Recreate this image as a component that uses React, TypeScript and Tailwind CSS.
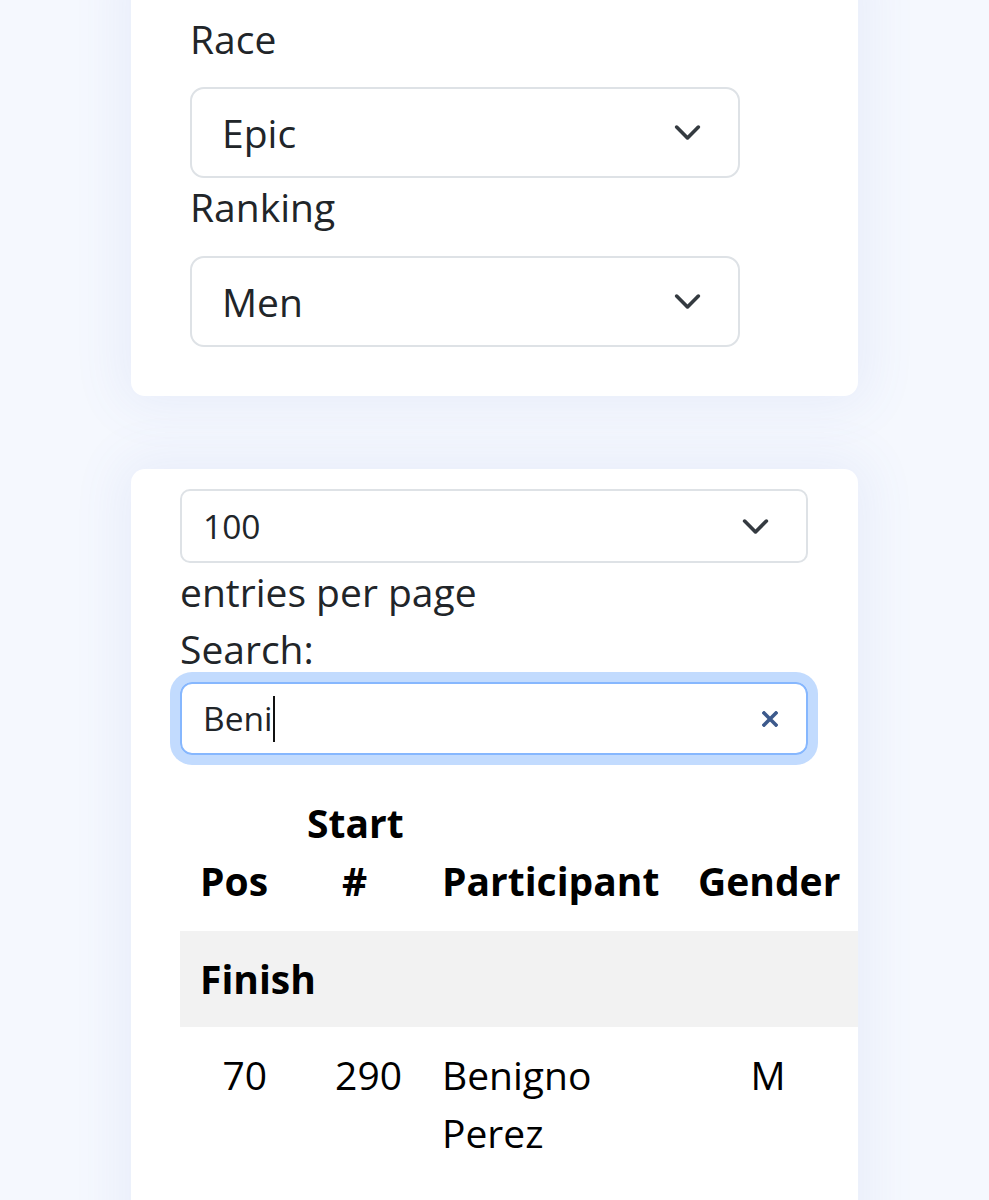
import React from "react";

const font = { fontFamily: '"Open Sans", "Noto Sans", sans-serif' };

function Chevron() {
  return (
    <svg viewBox="0 0 16 16" className="w-[29px] h-[29px] shrink-0" fill="none" stroke="#343a40" strokeWidth="2" strokeLinecap="round" strokeLinejoin="round">
      <path d="m2 5 6 6 6-6" />
    </svg>
  );
}

function Select({ value }: { value: string }) {
  return (
    <div className="flex items-center justify-between w-[550px] h-[91px] border-2 border-[#dee2e6] rounded-[14px] pl-[30px] pr-[36px] text-[39px] leading-[57px] text-[#212529] bg-white">
      <span>{value}</span>
      <Chevron />
    </div>
  );
}

export default function App() {
  return (
    <div className="h-[1200px] overflow-hidden bg-[#f5f8fe]" style={font}>
      {/* Filters */}
      <div className="ml-[131px] w-[727px] -mt-[40px] pt-[50px] pb-[49px] pl-[59px] rounded-[14px] bg-white shadow-[0_0_50px_12px_rgba(90,120,200,0.08)]">
        <div className="text-[39px] leading-[57px] text-[#212529] mb-[20px]">Race</div>
        <Select value="Epic" />
        <div className="text-[39px] leading-[57px] text-[#212529] mb-[21px]">Ranking</div>
        <Select value="Men" />
      </div>

      {/* Results */}
      <div className="ml-[131px] w-[727px] mt-[73px] pt-[20px] pl-[49px] h-[900px] rounded-[14px] bg-white overflow-hidden shadow-[0_0_50px_12px_rgba(90,120,200,0.08)]">
        <div className="flex items-center justify-between w-[628px] h-[74px] border-2 border-[#dee2e6] rounded-[10px] pl-[21px] pr-[36px] text-[33.5px] text-[#212529]">
          <span>100</span>
          <Chevron />
        </div>
        <div className="text-[39px] leading-[57px] text-[#212529]">entries per page</div>
        <div className="text-[39px] leading-[57px] text-[#212529]">Search:</div>
        <div className="mt-[5px] flex items-center justify-between w-[628px] h-[73px] border-2 border-[#86b7fe] rounded-[12px] ring-[10px] ring-[#c2dbfe] pl-[21px] pr-[28px] text-[33.5px] text-[#212529]">
          <span className="flex items-center">
            Beni
            <span className="inline-block w-[2px] h-[46px] bg-[#111] ml-[1px]" />
          </span>
          <svg viewBox="0 0 16 16" className="w-[16px] h-[16px]" stroke="#3d5a8c" strokeWidth="3.6" strokeLinecap="square">
            <path d="M2 2l12 12M14 2L2 14" />
          </svg>
        </div>

        <table className="mt-[20px] w-[900px] table-fixed border-collapse text-[39px] leading-[58px] text-black">
          <colgroup>
            <col className="w-[107px]" />
            <col className="w-[135px]" />
            <col className="w-[256px]" />
            <col className="w-[180px]" />
            <col className="w-[222px]" />
          </colgroup>
          <thead>
            <tr>
              <th className="px-[20px] pt-[19px] pb-[21px] font-bold text-center align-bottom">Pos</th>
              <th className="px-[20px] pt-[19px] pb-[21px] font-bold text-center align-bottom">Start #</th>
              <th className="px-[20px] pt-[19px] pb-[21px] font-bold text-center align-bottom">Participant</th>
              <th className="px-[20px] pt-[19px] pb-[21px] font-bold text-center align-bottom">Gender</th>
              <th className="px-[20px] pt-[19px] pb-[21px]" />
            </tr>
          </thead>
          <tbody>
            <tr className="bg-[#f2f2f2]">
              <td colSpan={5} className="px-[20px] py-[19px] font-bold text-left">Finish</td>
            </tr>
            <tr>
              <td className="px-[20px] py-[19px] text-right align-top">70</td>
              <td className="px-[20px] py-[19px] text-right align-top">290</td>
              <td className="px-[20px] py-[19px] text-left align-top">Benigno Perez</td>
              <td className="px-[20px] py-[19px] text-center align-top">M</td>
              <td className="px-[20px] py-[19px]" />
            </tr>
          </tbody>
        </table>
      </div>
    </div>
  );
}
